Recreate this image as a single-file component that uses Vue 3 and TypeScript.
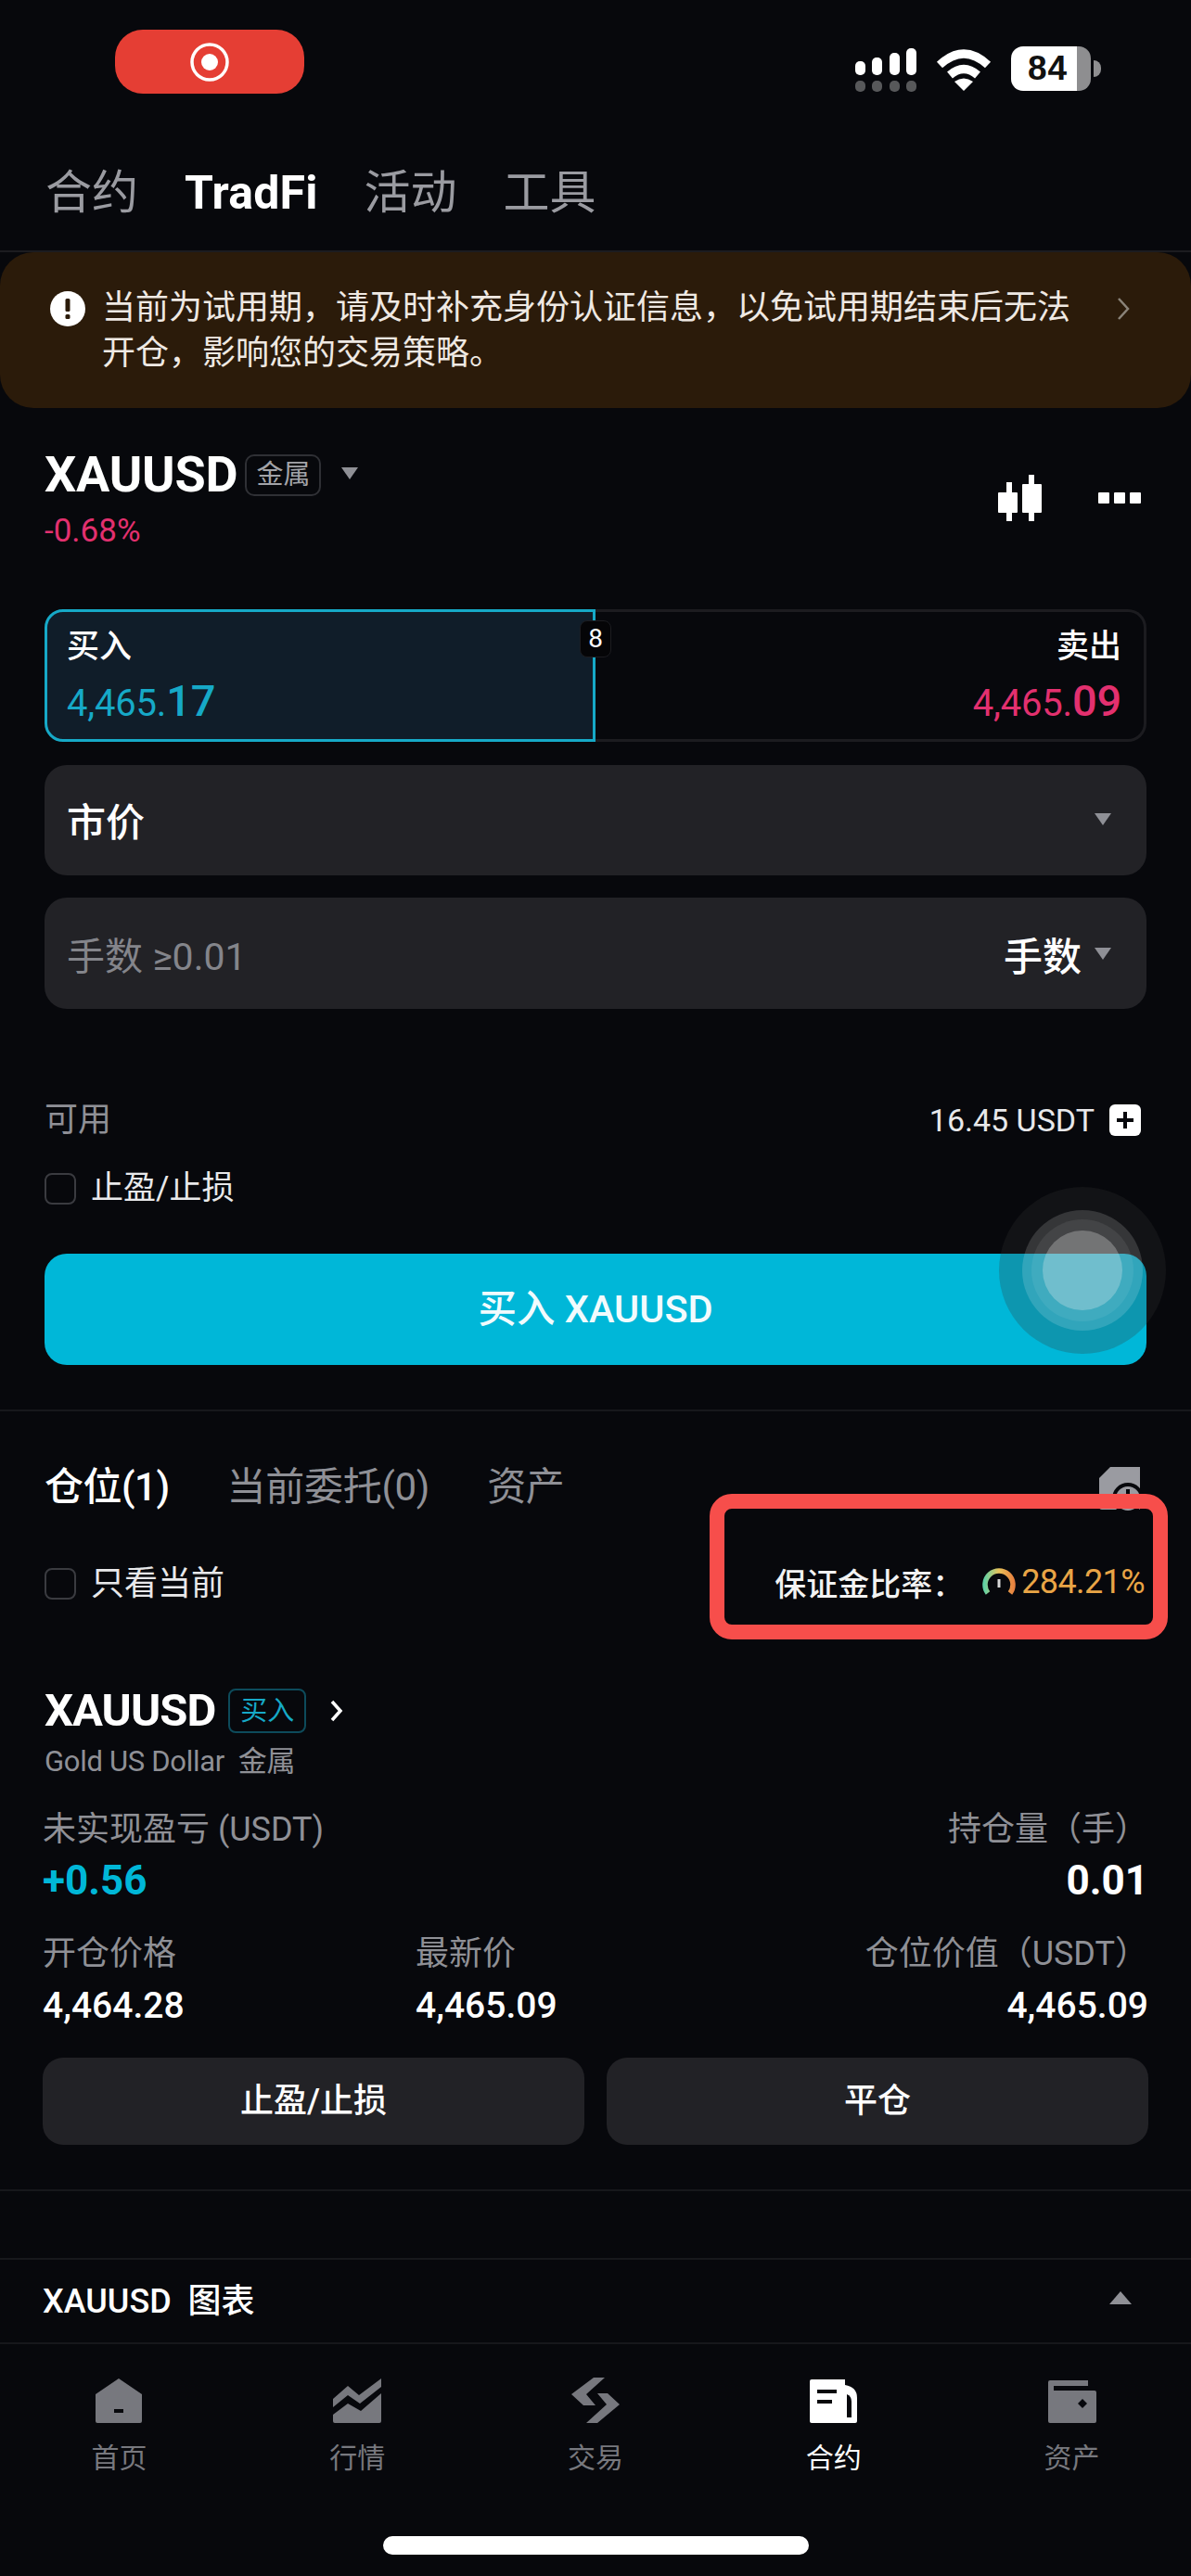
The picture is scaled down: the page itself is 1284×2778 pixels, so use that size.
<script setup lang="ts">
interface NavItem {
  label: string
  active?: boolean
  vb: string
  w: number
  h: number
  shapes: string[]
  cuts: string[]
}

const topTabs: { label: string; active?: boolean }[] = [
  { label: '合约' },
  { label: 'TradFi', active: true },
  { label: '活动' },
  { label: '工具' },
]

const nav: NavItem[] = [
  {
    label: '首页', vb: '0 0 50 48', w: 50, h: 48,
    shapes: ['M25 0 L50 17 V46 Q50 48 48 48 H2 Q0 48 0 46 V17 Z'],
    cuts: ['M20 33 H30 V37 H20 Z'],
  },
  {
    label: '行情', vb: '0 0 52 48', w: 52, h: 48,
    shapes: [
      'M0 22 L16 8 L28 18 L52 0 V9 L29 27 L16 18 L0 31 Z',
      'M0 39 L16 27 L30 35 L52 16 V46 Q52 48 50 48 H2 Q0 48 0 46 Z',
    ],
    cuts: [],
  },
  {
    label: '交易', vb: '0 0 52 49', w: 52, h: 49,
    shapes: [
      'M24 0 H36 L16 18 L26 30 H13 L0 18 Z',
      'M28 17 H39 L52 29 L28 49 H16 L38 29 Z',
    ],
    cuts: [],
  },
  {
    label: '合约', active: true, vb: '0 0 51 47', w: 51, h: 47,
    shapes: ['M2 0 H38 V6 Q51 8 51 20 V45 Q51 47 49 47 H2 Q0 47 0 45 V2 Q0 0 2 0 Z'],
    cuts: ['M8 11 H29 V15 H8 Z', 'M8 22 H24 V26 H8 Z', 'M40 16 Q45 18 45 24 V41 H40 Z'],
  },
  {
    label: '资产', vb: '0 0 52 46', w: 52, h: 46,
    shapes: ['M2 0 H43 V11 H50 Q52 11 52 13 V44 Q52 46 50 46 H2 Q0 46 0 44 V2 Q0 0 2 0 Z'],
    cuts: ['M6 6 H43 V11 H6 Z', 'M37 20 L42 25 L37 30 L32 25 Z'],
  },
]
</script>

<template>
  <div class="page">
    <header class="status">
      <div class="rec">
        <svg width="44" height="44" viewBox="0 0 44 44">
          <circle cx="22" cy="22" r="19" fill="none" stroke="#fff" stroke-width="3.5" />
          <circle cx="22" cy="22" r="9" fill="#fff" />
        </svg>
      </div>
      <div class="sys">
        <svg width="67" height="50" viewBox="0 0 67 50" fill="#fff">
          <rect x="0" y="14" width="11" height="15" rx="5" />
          <rect x="18" y="10" width="11" height="19" rx="5" />
          <rect x="37" y="5" width="11" height="24" rx="5" />
          <rect x="55" y="0" width="11" height="29" rx="5" />
          <g opacity=".32">
            <rect x="0" y="35" width="11" height="12" rx="5" />
            <rect x="18" y="35" width="11" height="12" rx="5" />
            <rect x="37" y="35" width="11" height="12" rx="5" />
            <rect x="55" y="35" width="11" height="12" rx="5" />
          </g>
        </svg>
        <svg width="60" height="46" viewBox="0 0 60 46" fill="none" stroke="#fff" stroke-width="9">
          <path d="M4 18 Q30 -6 56 18" />
          <path d="M15 29 Q30 16 45 29" />
          <path d="M30 46 L20 36 Q30 29 40 36 Z" fill="#fff" stroke="none" />
        </svg>
        <div class="battery">
          <span class="battery-body"><span class="battery-num">84</span></span>
          <span class="battery-nub"></span>
        </div>
      </div>
    </header>

    <nav class="top-tabs">
      <span v-for="t in topTabs" :key="t.label" :class="['top-tab', { on: t.active }]">{{ t.label }}</span>
    </nav>

    <section class="banner">
      <svg class="banner-icon" width="38" height="38" viewBox="0 0 38 38">
        <circle cx="19" cy="19" r="19" fill="#fff" />
        <rect x="16.5" y="8" width="5" height="14" rx="1.5" fill="#2b1b0a" />
        <rect x="16.5" y="25" width="5" height="5" rx="1.5" fill="#2b1b0a" />
      </svg>
      <p class="banner-text">当前为试用期，请及时补充身份认证信息，以免试用期结束后无法开仓，影响您的交易策略。</p>
      <svg width="14" height="26" viewBox="0 0 14 26" fill="none" stroke="#8a8379" stroke-width="2.5">
        <path d="M2 2 L12 13 L2 24" />
      </svg>
    </section>

    <section class="symbol">
      <div>
        <div class="symbol-title">
          <span class="symbol-name">XAUUSD</span>
          <span class="tag">金属</span>
          <i class="caret caret-big"></i>
        </div>
        <div class="change">-0.68%</div>
      </div>
      <div class="symbol-tools">
        <svg width="47" height="50" viewBox="0 0 47 50" fill="#fff">
          <rect x="9" y="8" width="6" height="42" />
          <rect x="0" y="19" width="21" height="22" rx="1" />
          <rect x="33" y="0" width="6" height="50" />
          <rect x="26" y="10" width="21" height="31" rx="1" />
        </svg>
        <svg width="46" height="12" viewBox="0 0 46 12" fill="#fff">
          <rect x="0" y="0" width="12" height="12" rx="1" />
          <rect x="17" y="0" width="12" height="12" rx="1" />
          <rect x="34" y="0" width="12" height="12" rx="1" />
        </svg>
      </div>
    </section>

    <section class="side">
      <div class="buy">
        <div class="side-label">买入</div>
        <div class="price buy-price">4,465.<b>17</b></div>
      </div>
      <div class="sell">
        <div class="side-label">卖出</div>
        <div class="price sell-price">4,465.<b>09</b></div>
      </div>
      <span class="spread">8</span>
    </section>

    <div class="field first"><span class="field-strong">市价</span><i class="caret"></i></div>
    <div class="field"><span class="placeholder">手数 ≥0.01</span><span class="field-right"><span class="field-strong">手数</span><i class="caret"></i></span></div>

    <div class="avail">
      <span class="muted">可用</span>
      <span class="avail-right">16.45 USDT
        <svg width="34" height="34" viewBox="0 0 34 34">
          <rect width="34" height="34" rx="6" fill="#fff" />
          <path d="M17 8 V26 M8 17 H26" stroke="#07080c" stroke-width="4" />
        </svg>
      </span>
    </div>
    <label class="check check-tp"><i class="box"></i>止盈/止损</label>
    <button class="buy-btn">买入 XAUUSD</button>

    <div class="rule rule-a"></div>

    <div class="order-tabs">
      <span class="order-tab on">仓位(1)</span>
      <span class="order-tab">当前委托(0)</span>
      <span class="order-tab">资产</span>
      <svg class="doc-icon" width="50" height="52" viewBox="0 0 50 52">
        <path d="M12 0 H44 V46 H3 Q0 46 0 43 V12 Z" fill="#9a9ba1" />
        <circle cx="31" cy="34" r="17" fill="#07080c" />
        <circle cx="31" cy="34" r="13" fill="#9a9ba1" />
        <rect x="29" y="24" width="4" height="13" fill="#07080c" />
      </svg>
    </div>

    <div class="filter">
      <label class="check"><i class="box"></i>只看当前</label>
      <div class="ratio">
        <span>保证金比率：</span>
        <svg class="gauge" width="36" height="30" viewBox="0 0 36 30" fill="none">
          <defs>
            <linearGradient id="gaugeG" gradientUnits="userSpaceOnUse" x1="2" y1="0" x2="34" y2="0">
              <stop offset="0" stop-color="#5fd2a6" />
              <stop offset=".5" stop-color="#e9c35a" />
              <stop offset="1" stop-color="#e8813f" />
            </linearGradient>
          </defs>
          <path d="M6 27 A15 15 0 1 1 30 27" stroke="url(#gaugeG)" stroke-width="5.5" />
          <path d="M18 12 V21" stroke="#d8d8d8" stroke-width="3" />
        </svg>
        <span class="ratio-val">284.21%</span>
      </div>
    </div>

    <div class="pos-title">
      <span class="pos-name">XAUUSD</span>
      <span class="buy-tag">买入</span>
      <svg width="14" height="24" viewBox="0 0 14 24" fill="none" stroke="#fff" stroke-width="3.5"><path d="M2 2 L11 12 L2 22" /></svg>
    </div>
    <div class="pos-sub">Gold US Dollar&nbsp; 金属</div>

    <div class="row row-1">
      <span class="muted">未实现盈亏 (USDT)</span>
      <span class="muted">持仓量（手）</span>
    </div>
    <div class="row row-1v">
      <span class="pnl">+0.56</span>
      <span class="qty">0.01</span>
    </div>
    <div class="stats stats-l">
      <span class="muted">开仓价格</span>
      <span class="muted">最新价</span>
      <span class="muted end">仓位价值（USDT）</span>
    </div>
    <div class="stats stats-v">
      <span>4,464.28</span>
      <span>4,465.09</span>
      <span class="end">4,465.09</span>
    </div>
    <div class="actions">
      <button class="act">止盈/止损</button>
      <button class="act">平仓</button>
    </div>

    <div class="rule rule-b"></div>
    <div class="rule rule-c"></div>
    <div class="chart-row">
      <span>XAUUSD&nbsp; 图表</span>
      <i class="caret caret-up"></i>
    </div>

    <footer class="nav">
      <div v-for="n in nav" :key="n.label" :class="['nav-item', { on: n.active }]">
        <span class="nav-icon">
          <svg :width="n.w" :height="n.h" :viewBox="n.vb">
            <path v-for="(d, i) in n.shapes" :key="i" :d="d" fill="currentColor" />
            <path v-for="(d, i) in n.cuts" :key="'c' + i" :d="d" fill="#07080c" />
          </svg>
        </span>
        <span class="nav-label">{{ n.label }}</span>
      </div>
    </footer>
    <div class="home-wrap"><div class="home"></div></div>

    <div class="assistive">
      <span class="a1"></span><span class="a2"></span><span class="a3"></span><span class="a4"></span>
    </div>
    <div class="highlight"></div>
  </div>
</template>

<style>
html, body { margin: 0; background: #07080c; }
</style>

<style scoped>
.page {
  position: relative;
  width: 1284px;
  height: 2778px;
  overflow: hidden;
  background: #07080c;
  color: #fff;
  font-family: Roboto, "Noto Sans CJK SC", sans-serif;
}
.status {
  height: 140px;
  box-sizing: border-box;
  padding: 32px 97px 0 124px;
  display: flex;
  justify-content: space-between;
  align-items: flex-start;
}
.rec {
  width: 204px;
  height: 69px;
  border-radius: 30px;
  background: #e53e34;
  display: flex;
  align-items: center;
  justify-content: center;
}
.sys {
  display: flex;
  align-items: flex-start;
  gap: 20px;
  margin-top: 18px;
}
.sys svg { display: block; margin-top: 2px; }
.battery { display: flex; align-items: center; margin-left: 1px; }
.battery-body {
  width: 86px;
  height: 48px;
  box-sizing: border-box;
  border-radius: 13px;
  background: linear-gradient(90deg, #fff 0 83%, #8e8e90 83% 100%);
  display: flex;
  align-items: center;
  padding-left: 18px;
}
.battery-num {
  font: 700 37px/48px "Liberation Sans", sans-serif;
  color: #111;
  letter-spacing: 1px;
}
.battery-nub {
  width: 8px;
  height: 18px;
  margin-left: 3px;
  border-radius: 0 9px 9px 0;
  background: #8e8e90;
}
.top-tabs {
  height: 132px;
  box-sizing: border-box;
  border-bottom: 2px solid #1c1c20;
  padding: 36px 0 0 49px;
  display: flex;
  gap: 50px;
  align-items: flex-start;
}
.top-tab { font-size: 50px; line-height: 64px; color: #9a9ba1; }
.top-tab.on { color: #fff; font-weight: 700; letter-spacing: .2px; }
.banner {
  height: 168px;
  box-sizing: border-box;
  background: #2b1b0a;
  border-radius: 36px;
  padding: 36px 66px 0 54px;
  display: flex;
  align-items: flex-start;
}
.banner-icon { margin-top: 6px; flex: none; }
.banner-text {
  margin: 0 44px 0 18px;
  width: 1050px;
  flex: none;
  font-size: 36px;
  line-height: 49px;
  color: #efe9e3;
}
.banner > svg:last-child { margin-top: 12px; flex: none; }
.symbol {
  display: flex;
  justify-content: space-between;
  padding: 46px 54px 0 48px;
}
.symbol-title { display: flex; align-items: center; height: 52px; }
.symbol-name { font-size: 54px; line-height: 52px; font-weight: 700; letter-spacing: -.2px; }
.tag {
  margin-left: 8px;
  width: 82px;
  height: 45px;
  box-sizing: border-box;
  border: 2px solid #2f3035;
  border-radius: 10px;
  font-size: 29px;
  line-height: 40px;
  text-align: center;
  color: #a2a3a8;
}
.caret {
  display: inline-block;
  width: 0;
  height: 0;
  border-left: 9px solid transparent;
  border-right: 9px solid transparent;
  border-top: 13px solid #8f9096;
}
.caret-big { margin-left: 22px; margin-top: -3px; }
.change { font-size: 35px; line-height: 40px; color: #e3306f; margin-top: 15px; }
.symbol-tools {
  display: flex;
  gap: 61px;
  align-items: center;
  height: 52px;
  margin-top: 25px;
}
.side {
  position: relative;
  margin: 64px 48px 0;
  height: 143px;
  display: flex;
}
.buy {
  width: 594px;
  box-sizing: border-box;
  background: #101d29;
  border: 3px solid #16a9c7;
  border-radius: 20px 0 0 20px;
  padding: 16px 0 0 21px;
}
.sell {
  flex: 1;
  box-sizing: border-box;
  border: 3px solid #1c1c20;
  border-left: 0;
  border-radius: 0 20px 20px 0;
  padding: 16px 24px 0 0;
  text-align: right;
}
.side-label { font-size: 35px; line-height: 44px; font-weight: 500; }
.price { font-size: 40px; line-height: 52px; margin-top: 10px; letter-spacing: -.2px; }
.price b { font-size: 47px; font-weight: 500; }
.buy-price { color: #16a9c7; }
.sell-price { color: #e3306f; }
.spread {
  position: absolute;
  left: 577px;
  top: 12px;
  width: 34px;
  height: 40px;
  background: #050507;
  border: 1px solid #1c1c20;
  border-radius: 8px;
  box-sizing: border-box;
  text-align: center;
  font-size: 28px;
  line-height: 38px;
}
.field {
  margin: 24px 48px 0;
  height: 120px;
  box-sizing: border-box;
  background: #222226;
  border-radius: 24px;
  padding: 0 38px 0 24px;
  display: flex;
  align-items: center;
  justify-content: space-between;
}
.field.first { margin-top: 25px; height: 119px; padding-bottom: 3px; }
.field-strong { font-size: 42px; font-weight: 500; }
.field-right { display: flex; align-items: center; gap: 14px; }
.placeholder { font-size: 41px; color: #84858b; }
.avail {
  margin: 98px 54px 0 48px;
  display: flex;
  justify-content: space-between;
  height: 44px;
  align-items: center;
}
.muted { color: #8f9096; font-size: 36px; line-height: 40px; }
.avail-right { display: flex; align-items: center; gap: 16px; font-size: 34px; color: #e8e8ea; }
.check {
  display: flex;
  align-items: center;
  gap: 16px;
  font-size: 36px;
  line-height: 44px;
  color: #e8e8ea;
}
.check-tp { margin: 30px 48px -2px; font-size: 35px; }
.box {
  width: 34px;
  height: 34px;
  box-sizing: border-box;
  border: 2px solid #3a3b40;
  border-radius: 8px;
  flex: none;
}
.buy-btn {
  display: block;
  margin: 50px 48px 0;
  width: 1188px;
  height: 120px;
  border: 0;
  border-radius: 24px;
  background: #00b7d8;
  color: #f2fbfd;
  font: 500 41.5px/120px Roboto, "Noto Sans CJK SC", sans-serif;
  padding: 0;
}
.rule { height: 2px; background: #17181c; }
.rule-a { margin-top: 48px; }
.order-tabs {
  margin: 54px 49px 0 48px;
  height: 56px;
  display: flex;
  align-items: center;
  position: relative;
}
.order-tab { font-size: 42px; line-height: 56px; color: #8f9096; margin-right: 62px; letter-spacing: -.3px; }
.order-tab.on { color: #fff; font-weight: 500; letter-spacing: -.5px; }
.doc-icon { position: absolute; right: 0; top: 6px; }
.filter {
  margin: 54px 50px 0 48px;
  height: 44px;
  display: flex;
  justify-content: space-between;
  align-items: center;
}
.ratio { display: flex; align-items: center; font-size: 34px; color: #f2f2f2; font-weight: 500; margin-top: -4px; }
.gauge { margin: 0 6px 0 20px; }
.ratio-val { color: #e9a546; font-size: 36px; letter-spacing: -.6px; font-weight: 400; }
.pos-title {
  margin: 87px 48px 0;
  height: 56px;
  display: flex;
  align-items: center;
}
.pos-name { font-size: 49px; font-weight: 700; letter-spacing: -1px; line-height: 56px; }
.buy-tag {
  margin: 0 26px 0 14px;
  width: 84px;
  height: 48px;
  box-sizing: border-box;
  border: 2px solid #0d4b5b;
  border-radius: 8px;
  color: #16a9c7;
  font-size: 29px;
  line-height: 44px;
  text-align: center;
}
.pos-sub { margin: 9px 48px 0; font-size: 31px; line-height: 36px; color: #8f9096; letter-spacing: -.3px; }
.row {
  margin: 0 46px;
  display: flex;
  justify-content: space-between;
}
.row-1 { margin-top: 35px; height: 40px; }
.row-1v { margin-top: 10px; height: 50px; align-items: center; }
.pnl { font-size: 44px; line-height: 50px; font-weight: 700; color: #00b7d8; }
.qty { font-size: 44px; line-height: 50px; font-weight: 700; }
.stats {
  margin: 0 46px;
  display: grid;
  grid-template-columns: 402px 1fr auto;
}
.stats-l { margin-top: 34px; height: 40px; }
.stats-v { margin-top: 14px; font-size: 39px; line-height: 44px; font-weight: 500; }
.end { text-align: right; }
.actions {
  margin: 34px 46px 0;
  display: grid;
  grid-template-columns: 1fr 1fr;
  gap: 24px;
}
.act {
  height: 94px;
  border: 0;
  border-radius: 22px;
  background: #222226;
  color: #fff;
  font: 500 36px/94px Roboto, "Noto Sans CJK SC", sans-serif;
  padding: 0;
}
.rule-b { margin-top: 48px; }
.rule-c { margin-top: 72px; }
.chart-row {
  height: 91px;
  box-sizing: border-box;
  border-bottom: 2px solid #17181c;
  padding: 0 64px 8px 46px;
  display: flex;
  align-items: center;
  justify-content: space-between;
  font-size: 36px;
  font-weight: 500;
}
.caret-up { border-top: 0; border-bottom: 14px solid #8f9096; border-left-width: 12px; border-right-width: 12px; }
.nav {
  display: grid;
  grid-template-columns: repeat(5, 1fr);
  padding: 35px 0 0;
}
.nav-item { display: flex; flex-direction: column; align-items: center; color: #77787e; }
.nav-item.on { color: #fff; }
.nav-icon { height: 50px; display: flex; align-items: flex-end; justify-content: center; }
.nav-icon svg { display: block; }
.nav-label { margin-top: 18px; font-size: 30px; line-height: 40px; }
.home-wrap { margin-top: 64px; display: flex; justify-content: center; }
.home { width: 459px; height: 20px; border-radius: 10px; background: #fff; }
.assistive {
  position: absolute;
  left: 1077px;
  top: 1280px;
  width: 180px;
  height: 180px;
}
.assistive span { position: absolute; border-radius: 50%; }
.a1 { inset: 0; background: rgba(52, 52, 52, .25); }
.a2 { inset: 25px; background: rgba(255, 255, 255, .15); }
.a3 { inset: 35px; background: rgba(255, 255, 255, .07); }
.a4 { inset: 47px; background: rgba(240, 240, 240, .28); }
.highlight {
  position: absolute;
  left: 765px;
  top: 1611px;
  width: 494px;
  height: 157px;
  box-sizing: border-box;
  border: 16px solid #f74e4b;
  border-radius: 24px;
}
</style>
